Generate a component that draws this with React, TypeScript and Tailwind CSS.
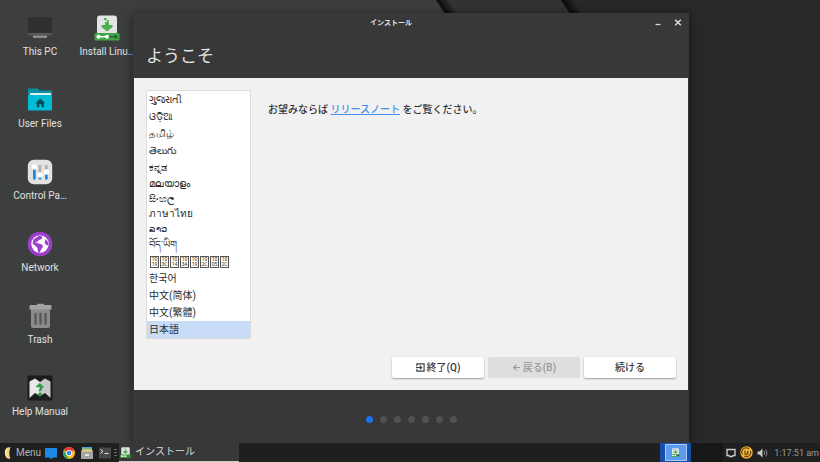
import type { ReactNode } from "react";

const FONT = "font-['Roboto','Noto_Sans_CJK_JP',sans-serif]";

function InstallIcon({ className }: { className: string }) {
  return (
    <svg viewBox="0 0 26 26" className={className} aria-hidden="true">
      <rect x="3" y="0.500" width="20" height="19" rx="3" fill="#e4e4e4" />
      <path d="M11 7h4v3h3.500v2L13 16.500 7.500 12v-2H11z" fill="#4caf50" />
      <path d="M10 3h2.500v2H10zM12.500 5H15v1.500h-2.500z" fill="#4caf50" />
      <rect x="0.500" y="18" width="25" height="7.500" rx="1.500" fill="#43a548" />
      <path d="M5 21.700h8" stroke="#fff" strokeWidth="1.400" />
      <path d="M14 21.700h7" stroke="#1e6b2a" strokeWidth="1.400" />
      <circle cx="4.500" cy="21.700" r="2" fill="#fff" />
      <circle cx="13" cy="21.700" r="2" fill="#fff" />
      <circle cx="21.500" cy="21.700" r="2" fill="#1e6b2a" />
    </svg>
  );
}

function ComputerIcon() {
  return (
    <svg viewBox="0 0 26 26" className="size-[26px]" aria-hidden="true">
      <rect x="1" y="2" width="24" height="18" rx="1" fill="#2f3030" />
      <path d="M1 18h24v1.500a1 1 0 0 1-1 1H2a1 1 0 0 1-1-1z" fill="#585a59" />
      <rect x="6" y="20.500" width="14" height="2.500" rx="0.500" fill="#8b8d8c" />
    </svg>
  );
}

function FolderIcon() {
  return (
    <svg viewBox="0 0 26 26" className="size-[26px]" aria-hidden="true">
      <path d="M1 2.500a1 1 0 0 1 1-1h9l1.500 2H24a1 1 0 0 1 1 1v5H1z" fill="#0b8fa3" />
      <rect x="3" y="6" width="21" height="4" fill="#e3eff0" />
      <path d="M1 8h24v14.500a1 1 0 0 1-1 1H2a1 1 0 0 1-1-1z" fill="#00bcd4" />
      <path d="M13.300 11.500l5 4.700h-1.500v4h-2.400v-3h-2.200v3H9.800v-4H8.300z" fill="#064c56" />
    </svg>
  );
}

function SlidersIcon() {
  return (
    <svg viewBox="0 0 26 26" className="size-[26px]" aria-hidden="true">
      <rect x="0.800" y="0.800" width="24.400" height="24.400" rx="6" fill="#e2e2e2" />
      <path d="M7.300 6v14M13 6v14M19.300 6v14" stroke="#b0b0b0" strokeWidth="2.600" />
      <path d="M7.300 8v12.500M13 17v3.500M19.300 13v7.500" stroke="#1e88e5" strokeWidth="2.600" />
      <circle cx="7.300" cy="8" r="2.700" fill="#fff" />
      <circle cx="13" cy="16" r="2.700" fill="#fff" />
      <circle cx="19.300" cy="13" r="2.700" fill="#fff" />
    </svg>
  );
}

function GlobeIcon() {
  return (
    <svg viewBox="0 0 26 26" className="size-[26px]" aria-hidden="true">
      <circle cx="13" cy="13" r="12.300" fill="#9c3fcb" />
      <circle cx="13" cy="13" r="8.700" fill="#fff" />
      <path
        d="M12.500 4.500l3 1.200-1 2.300-2.500 1-1 1.500-3 .5 3.500 1.500 3.500 1 1 2-1.500 2.500-2 3.500-1.500-.5-.5-4-2.500-2.500-2.500-2 1-4zM18.500 8l2.500 3 .5 3.500-2.500-.5-1.500-2.500z"
        fill="#9c3fcb"
      />
    </svg>
  );
}

function TrashIcon() {
  return (
    <svg viewBox="0 0 26 26" className="size-[26px]" aria-hidden="true">
      <path d="M4 6h19v17a2 2 0 0 1-2 2H6a2 2 0 0 1-2-2z" fill="#8b8b8b" />
      <path d="M2.500 3a1 1 0 0 1 1-1H10l.5-1.200h6L17 2h6.500a1 1 0 0 1 1 1v3.500h-22z" fill="#a3a3a3" />
      <path d="M8.500 11v9.500M13.500 11v9.500M18.500 11v9.500" stroke="#5b5c5b" strokeWidth="2.600" strokeLinecap="round" />
    </svg>
  );
}

function ManualIcon() {
  return (
    <svg viewBox="0 0 26 26" className="size-[26px]" aria-hidden="true">
      <rect x="0.500" y="0.500" width="25" height="25" rx="1" fill="#1b1c1b" />
      <path d="M2.500 6.500L8 3.500l5 3.500v14l-5-3-5.500 5z" fill="#e8e8e8" />
      <path d="M13 7l5-3.500 5.500 3V23L18 18l-5 3z" fill="#c9c9c9" />
      <path d="M8.500 12l4-4 5 4.500h-2.500V15l-2 1.500h-1.500l1.500-4z" fill="#2e9e45" />
      <circle cx="13" cy="19.500" r="1.900" fill="#2e9e45" />
    </svg>
  );
}

const shortcuts: { label: string; icon: ReactNode; place: string }[] = [
  { label: "This PC", icon: <ComputerIcon />, place: "col-start-1" },
  { label: "Install Linu…", icon: <InstallIcon className="size-[26px]" />, place: "col-start-2" },
  { label: "User Files", icon: <FolderIcon />, place: "col-start-1" },
  { label: "Control Pa…", icon: <SlidersIcon />, place: "col-start-1" },
  { label: "Network", icon: <GlobeIcon />, place: "col-start-1" },
  { label: "Trash", icon: <TrashIcon />, place: "col-start-1" },
  { label: "Help Manual", icon: <ManualIcon />, place: "col-start-1" },
];

const TALL = "h-[17px]";
const SHORT = "h-[15px]";

const languages: { name: string; height: string; codes?: string[] }[] = [
  { name: "ગુજરાતી", height: TALL },
  { name: "ଓଡ଼ିଆ", height: TALL },
  { name: "தமிழ்", height: TALL },
  { name: "తెలుగు", height: TALL },
  { name: "ಕನ್ನಡ", height: TALL },
  { name: "മലയാളം", height: SHORT },
  { name: "සිංහල", height: SHORT },
  { name: "ภาษาไทย", height: SHORT },
  { name: "ລາວ", height: SHORT },
  { name: "བོད་ཡིག", height: TALL },
  { name: "Burmese", height: TALL, codes: ["1019", "103C", "1014", "103A", "1019", "102C", "1005", "102C"] },
  { name: "한국어", height: TALL },
  { name: "中文(简体)", height: TALL },
  { name: "中文(繁體)", height: TALL },
  { name: "日本語", height: TALL },
];

// Code points shown as boxed hex digits, two over two.
function CodeBoxes({ codes }: { codes: string[] }) {
  return (
    <span className="flex gap-px pl-px">
      {codes.map((code, i) => (
        <span key={i} className="flex h-3 w-[9px] flex-col items-center justify-center border border-[#555] text-[5px] leading-[5px]">
          <span>{code.slice(0, 2)}</span>
          <span>{code.slice(2)}</span>
        </span>
      ))}
    </span>
  );
}

function Wallpaper() {
  return (
    <svg className="absolute inset-0 size-full" viewBox="0 0 820 462" preserveAspectRatio="none" aria-hidden="true">
      <defs>
        <filter id="soft" x="-50%" y="-50%" width="200%" height="200%">
          <feGaussianBlur stdDeviation="2.500" />
        </filter>
      </defs>
      <rect width="820" height="462" fill="#282a29" />
      <path d="M555 -10L597 50" stroke="#0a0c0b" strokeWidth="10" filter="url(#soft)" />
      <path d="M0 0H561L600 60V462H0z" fill="#313433" />
      <path d="M430 -10L472 50" stroke="#0a0c0b" strokeWidth="10" filter="url(#soft)" />
      <path d="M0 0H436L475 60V462H0z" fill="#3d3f3e" />
    </svg>
  );
}

function Installer() {
  return (
    <main className="absolute top-[13px] right-[131px] bottom-0 left-[133px] flex flex-col bg-[#383838] px-px shadow-[0_2px_10px_rgba(0,0,0,0.55)]">
      <header className="flex h-[65px] flex-col">
        <div className="flex h-5 items-center">
          <h1 className="flex-1 text-center text-[7px] leading-3 font-bold text-[#e6e6e6]">インストール</h1>
          <div className="flex w-10 items-center justify-end gap-2 pr-1">
            <button type="button" aria-label="Minimize" className="flex size-3 items-center justify-center">
              <svg viewBox="0 0 12 12" className="size-3">
                <path d="M3.500 7.500h5" stroke="#d8d8d8" strokeWidth="1.300" />
              </svg>
            </button>
            <button type="button" aria-label="Close" className="flex size-3 items-center justify-center">
              <svg viewBox="0 0 12 12" className="size-3">
                <path d="M3.200 2.700l5.600 5.600M8.800 2.700l-5.600 5.600" stroke="#e0e0e0" strokeWidth="1.400" />
              </svg>
            </button>
          </div>
        </div>
        <h2 className="px-3 pt-[11px] text-[17px] leading-6 text-[#e4e4e4]">ようこそ</h2>
      </header>

      <section className="flex h-[312px] flex-col justify-between bg-[#f1f1f1] p-3">
        <div className="flex gap-[17px]">
          <div role="listbox" aria-label="言語" className="w-[105px] border border-[#dcdcdc] bg-white text-[10px] text-[#2c2c2c]">
            {languages.map((l) => {
              const selected = l.name === "日本語";
              return (
                <button
                  key={l.name}
                  type="button"
                  role="option"
                  aria-selected={selected}
                  aria-label={l.name}
                  className={`flex w-full items-center overflow-hidden px-0.5 leading-4 whitespace-nowrap ${l.height} ${selected ? "bg-[#c8dcf8]" : ""}`}
                >
                  {l.codes ? <CodeBoxes codes={l.codes} /> : l.name}
                </button>
              );
            })}
          </div>
          <p className="pt-3 text-[10px] leading-4 font-medium text-[#333]">
            お望みならば{" "}
            <a href="#notes" className="text-[#4a8df0] underline">
              リリースノート
            </a>{" "}
            をご覧ください。
          </p>
        </div>
        <div className="flex justify-end gap-1 text-[10px] leading-4 font-medium text-[#3a3a3a]">
          <button type="button" className="flex h-[21px] w-[92px] items-center justify-center gap-0.5 rounded-xs bg-white shadow-[0_1px_2px_rgba(0,0,0,0.35)]">
            <svg viewBox="0 0 10 10" className="size-[9px]" fill="none" stroke="#3a3f45" strokeWidth="1.300" aria-hidden="true">
              <path d="M1 3.500V1h8v8H1V6.500M0 5h6M4.300 3L6.300 5l-2 2" />
            </svg>
            終了(Q)
          </button>
          <button type="button" disabled className="flex h-[21px] w-[92px] items-center justify-center gap-0.5 rounded-xs bg-[#dedede] text-[#9a9a9a]">
            <svg viewBox="0 0 10 10" className="size-[9px]" fill="none" stroke="#9a9a9a" strokeWidth="1.300" aria-hidden="true">
              <path d="M9 5H2M5 1.800L1.800 5 5 8.200" />
            </svg>
            戻る(B)
          </button>
          <button type="button" className="flex h-[21px] w-[92px] items-center justify-center rounded-xs bg-white shadow-[0_1px_2px_rgba(0,0,0,0.35)]">
            続ける
          </button>
        </div>
      </section>

      <div className="flex justify-center gap-[7px] pt-[26px]">
        {[0, 1, 2, 3, 4, 5, 6].map((step) => (
          <span key={step} className={`size-[7px] rounded-full ${step === 0 ? "bg-[#1a73e8]" : "bg-[#515151]"}`} />
        ))}
      </div>
    </main>
  );
}

function Taskbar() {
  return (
    <footer className="relative flex h-[19px] shrink-0 items-center bg-[#1f1f1f] text-[10px] leading-4 text-[#b4b4b4]">
      <button type="button" className="flex items-center gap-0.5 pl-0.5">
        <svg viewBox="0 0 12 14" className="h-[14px] w-3" aria-hidden="true">
          <path d="M8.500 1.500C4 .5 2.500 4 3 8c.2 3.500 3 5.500 5.500 4.500C7 10 7 4 8.500 1.500z" fill="#f6d774" />
          <path d="M4.500 3c-1 3-1 6 .5 8.500" stroke="#fff3c4" fill="none" />
        </svg>
        Menu
      </button>
      <div className="flex items-center gap-1.5 pl-1">
        <button type="button" aria-label="Show desktop">
          <svg viewBox="0 0 12 12" className="size-3">
            <path d="M0 1h12v9.500H8L6 12l-2-1.500H0z" fill="#1e88e5" />
          </svg>
        </button>
        <button type="button" aria-label="Browser">
          <svg viewBox="0 0 12 12" className="size-3">
            <circle cx="6" cy="6" r="6" fill="#fbc02d" />
            <path d="M6 6L.8 3A6 6 0 0 1 11.200 3z" fill="#e53935" />
            <path d="M.8 3L3.500 8 6 12A6 6 0 0 1 .8 3z" fill="#34a853" />
            <circle cx="6" cy="6" r="3" fill="#fff" />
            <circle cx="6" cy="6" r="2.300" fill="#4285f4" />
          </svg>
        </button>
        <button type="button" aria-label="Files">
          <svg viewBox="0 0 12 12" className="size-3">
            <path d="M1 0h10v2H1z" fill="#5a9fd4" />
            <path d="M1 1.500h10V3H1z" fill="#9bc46b" />
            <path d="M.5 3h11v2H.5z" fill="#efd27a" />
            <path d="M0 4.500h12V12H0z" fill="#a4a4a4" />
            <path d="M4 8h4" stroke="#fff" strokeWidth="1.400" />
          </svg>
        </button>
        <button type="button" aria-label="Terminal">
          <svg viewBox="0 0 12 12" className="size-3">
            <rect y="0.500" width="12" height="11" fill="#484848" />
            <path d="M1.500 2.500L4 4.500l-2.500 2M5.500 6.500h4" stroke="#e4e4e4" fill="none" />
          </svg>
        </button>
      </div>
      <svg viewBox="0 0 4 10" className="ml-[3px] h-[10px] w-1" aria-hidden="true">
        <path d="M0 1.500h3M0 4.500h3M0 7.500h3" stroke="#6a6a6a" />
      </svg>
      <button type="button" className="ml-px flex h-full w-[120px] items-center gap-1 border-b border-[#c8c8c8] bg-[#383838] pl-px text-[10px] text-[#dadada]">
        <InstallIcon className="size-[11px]" />
        インストール
      </button>
      <div className="flex h-full flex-1 justify-end">
        <button type="button" aria-label="Workspace 1" className="flex h-full w-[31px] justify-center bg-[#174ea6] pt-px">
          <span className="flex h-[17px] w-[22px] items-center justify-center border border-[#a9c8f7] bg-[#5a9bf0]">
            <InstallIcon className="size-[9px]" />
          </span>
        </button>
        <button type="button" aria-label="Workspace 2" className="h-full w-8 bg-[#161717]" />
      </div>
      <div className="flex items-center gap-[3px] pr-px pl-0.5">
        <svg viewBox="0 0 12 12" className="size-3" aria-hidden="true">
          <path d="M2 2.500h8v6H8L7.500 9.500h-3L4 8.500H2z" fill="none" stroke="#c8c8c8" strokeWidth="1.400" />
        </svg>
        <svg viewBox="0 0 13 13" className="size-[13px]" aria-hidden="true">
          <circle cx="6.500" cy="6.500" r="6.200" fill="#f5b431" />
          <path d="M2.500 8.500A4.300 4.300 0 0 1 9 3M10.500 5A4.300 4.300 0 0 1 4.500 10.200M5 4.500v3a1 1 0 0 0 2 .5l1-3v2.500" fill="none" stroke="#5b3d10" strokeWidth="1.100" />
        </svg>
        <svg viewBox="0 0 12 12" className="size-3" aria-hidden="true">
          <path d="M1.500 4.500h2l3-3v9l-3-3h-2z" fill="#c8c8c8" />
          <path d="M8 4a3 3 0 0 1 0 4M9.500 2.500a5 5 0 0 1 0 7" fill="none" stroke="#8c8c8c" />
        </svg>
        <time className="pl-[3px] text-[9px] whitespace-nowrap text-[#9c9c9c]">1:17:51 am</time>
      </div>
    </footer>
  );
}

export default function App() {
  return (
    <div className={`relative flex h-screen flex-col overflow-hidden ${FONT}`}>
      <Wallpaper />
      <div className="relative min-h-0 flex-1">
        <nav aria-label="Desktop" className="grid w-[134px] auto-rows-[72px] grid-cols-[80px_54px] pt-[15px] text-[10px] leading-4 text-[#e0e0e0]">
          {shortcuts.map((s) => (
            <button key={s.label} type="button" className={`flex flex-col items-center gap-[3px] whitespace-nowrap ${s.place}`}>
              {s.icon}
              {s.label}
            </button>
          ))}
        </nav>
        <Installer />
      </div>
      <Taskbar />
    </div>
  );
}
